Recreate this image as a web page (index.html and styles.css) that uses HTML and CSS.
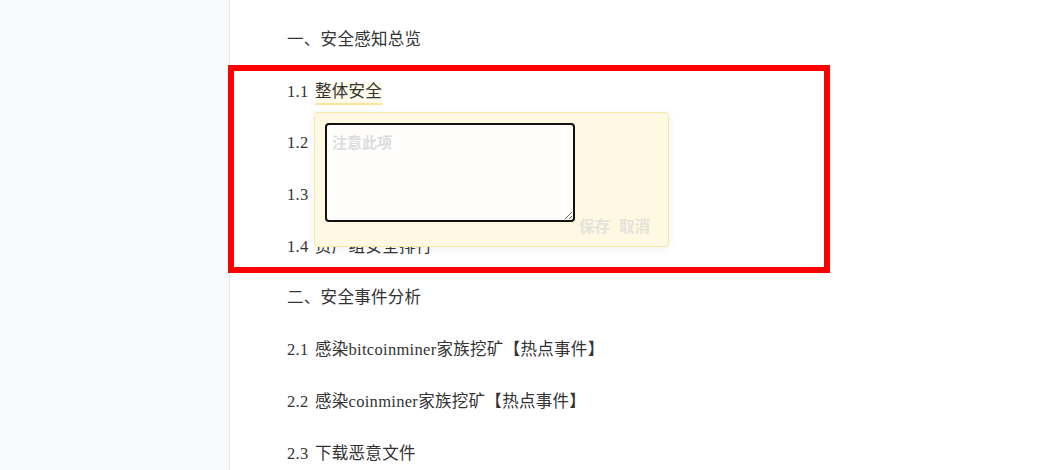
FILE: index.html
```
<!DOCTYPE html>
<html lang="zh">
<head>
<meta charset="utf-8">
<link rel="stylesheet" href="styles.css">
</head>
<body>
<div class="page">
  <aside class="sidebar"></aside>
  <main class="content">
    <div class="item">一、安全感知总览</div>
    <div class="item">1.1 <span class="mark">整体安全</span></div>
    <div class="item">1.2 安全态势趋势</div>
    <div class="item">1.3 风险资产分布</div>
    <div class="item">1.4 资产组安全排行</div>
    <div class="item">二、安全事件分析</div>
    <div class="item">2.1 感染bitcoinminer家族挖矿【热点事件】</div>
    <div class="item">2.2 感染coinminer家族挖矿【热点事件】</div>
    <div class="item">2.3 下载恶意文件</div>

    <div class="popup">
      <textarea class="note" placeholder="注意此项"></textarea>
      <div class="actions">
        <span class="btn">保存</span>
        <span class="btn">取消</span>
      </div>
    </div>
    <div class="annot"></div>
  </main>
</div>
</body>
</html>
```
FILE: styles.css
```
html, body {
  margin: 0;
  padding: 0;
  height: 100%;
  overflow: hidden;
  background: #fff;
}
.page {
  display: flex;
  height: 470px;
}
.sidebar {
  width: 229px;
  flex: none;
  background: #f8f9fb;
  border-right: 1px solid #e6e8ec;
}
.content {
  position: relative;
  flex: 1;
  padding: 28px 0 0 57px;
  display: flex;
  flex-direction: column;
  gap: 27.7px;
  font-family: "Liberation Serif", "Noto Sans CJK SC", serif;
  font-size: 16.5px;
  letter-spacing: 0.3px;
  word-spacing: 2px;
  color: #333;
}
.item {
  line-height: 24px;
  height: 24px;
  white-space: nowrap;
}
.mark {
  background: #fffbea;
  border-bottom: 2px solid #fce49a;
  padding-bottom: 2px;
}
.popup {
  position: absolute;
  left: 84px;
  top: 112px;
  background: #fff8e2;
  border: 1px solid #fbe8a6;
  border-radius: 3px;
  box-shadow: 0 2px 8px rgba(0,0,0,0.06);
  display: flex;
  align-items: flex-end;
  padding: 10px 0 0 10px;
  box-sizing: border-box;
  gap: 4px;
  height: 135px;
  width: 355px;
  word-spacing: 0;
  letter-spacing: 0;
}
.note {
  align-self: flex-start;
  width: 250px;
  height: 99px;
  box-sizing: border-box;
  border: 2px solid #111;
  border-radius: 4px;
  background: #fffefc;
  padding: 6px 5px;
  font-family: "Noto Sans CJK SC", sans-serif;
  font-size: 15px;
  font-weight: 700;
  resize: both;
  outline: none;
  margin: 0;
}
.note::placeholder {
  color: #dcdcdc;
}
.actions {
  display: flex;
  gap: 9px;
  padding-bottom: 11px;
}
.btn {
  font-family: "Noto Sans CJK SC", sans-serif;
  font-size: 15.5px;
  font-weight: 700;
  color: #e6e3db;
  line-height: 20px;
}
.annot {
  position: absolute;
  left: -2px;
  top: 65px;
  width: 602px;
  height: 208px;
  border: 6px solid #fe0000;
  box-sizing: border-box;
  pointer-events: none;
}
```
